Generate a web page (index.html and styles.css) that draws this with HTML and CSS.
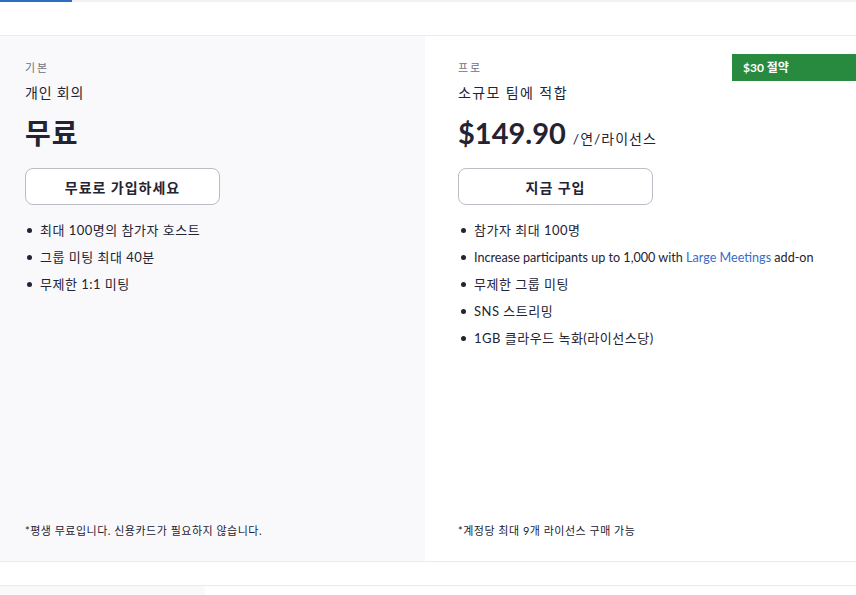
FILE: index.html
```html
<!DOCTYPE html>
<html lang="ko">
<head>
<meta charset="utf-8">
<title>Plans</title>
<link rel="stylesheet" href="styles.css">
</head>
<body>
<div class="tabs">
  <div class="tab-indicator"></div>
  <div class="tab-rest"></div>
</div>
<div class="tab-space"></div>
<div class="plans">
  <section class="plan plan-basic">
    <div class="plan-label">기본</div>
    <div class="plan-sub">개인 회의</div>
    <div class="plan-price"><span class="price-big kr">무료</span></div>
    <button class="plan-btn">무료로 가입하세요</button>
    <ul class="features">
      <li>최대 100명의 참가자 호스트</li>
      <li>그룹 미팅 최대 40분</li>
      <li>무제한 1:1 미팅</li>
    </ul>
    <div class="footnote">*평생 무료입니다. 신용카드가 필요하지 않습니다.</div>
  </section>
  <section class="plan plan-pro">
    <div class="badge">$30 절약</div>
    <div class="plan-label">프로</div>
    <div class="plan-sub">소규모 팀에 적합</div>
    <div class="plan-price"><span class="price-big">$149.90</span><span class="price-unit">/연/라이선스</span></div>
    <button class="plan-btn">지금 구입</button>
    <ul class="features">
      <li>참가자 최대 100명</li>
      <li class="en">Increase participants up to 1,000 with <a class="link" href="#">Large Meetings</a> add-on</li>
      <li>무제한 그룹 미팅</li>
      <li>SNS 스트리밍</li>
      <li>1GB 클라우드 녹화(라이선스당)</li>
    </ul>
    <div class="footnote">*계정당 최대 9개 라이선스 구매 가능</div>
  </section>
</div>
<div class="gap-row"></div>
<div class="bottom-row">
  <div class="bottom-block"></div>
</div>
</body>
</html>
```
FILE: styles.css
```css
* { box-sizing: border-box; }
html, body {
  margin: 0;
  padding: 0;
  background: #ffffff;
}
body {
  font-family: Lato, "Noto Sans CJK KR", sans-serif;
  color: #232333;
  width: 856px;
  overflow: hidden;
}
.tabs {
  display: flex;
  height: 2px;
}
.tab-indicator {
  width: 72px;
  background: #2d6cc0;
}
.tab-rest {
  flex: 1;
  background: #f1f1f3;
}
.tab-space {
  height: 34px;
  border-bottom: 1px solid #ebebee;
}
.plans {
  display: grid;
  grid-template-columns: 425px 431px;
  height: 526px;
  border-bottom: 1px solid #ebebee;
}
.plan {
  position: relative;
  display: flex;
  flex-direction: column;
  align-items: flex-start;
  padding: 24px 0 22px 25px;
}
.plan-basic {
  background: #f9f9fb;
}
.plan-pro {
  background: #ffffff;
  padding-left: 33px;
}
.plan-label {
  font-size: 11px;
  line-height: 16px;
  color: #6e7080;
  letter-spacing: 2px;
}
.plan-sub {
  margin-top: 8px;
  font-size: 14px;
  line-height: 18px;
  letter-spacing: 1px;
}
.plan-basic .plan-sub {
  letter-spacing: 0.8px;
}
.plan-pro .plan-sub {
  letter-spacing: 1.4px;
}
.plan-price {
  margin-top: 10px;
  height: 42px;
  display: flex;
  align-items: baseline;
}
.price-big {
  font-size: 29px;
  font-weight: 700;
  line-height: 42px;
  color: #232333;
}
.price-big.kr {
  font-size: 28px;
  letter-spacing: 1px;
}
.price-unit {
  margin-left: 7px;
  font-size: 14px;
  letter-spacing: 1px;
  color: #232333;
}
.plan-btn {
  margin-top: 14px;
  width: 195px;
  height: 37px;
  border: 1px solid #bcbcc4;
  border-radius: 8px;
  background: #ffffff;
  font-family: Lato, "Noto Sans CJK KR", sans-serif;
  font-size: 14px;
  font-weight: 700;
  color: #232333;
  letter-spacing: 1px;
}
.features {
  list-style: none;
  margin: 12px 0 0 0;
  padding: 0;
}
.features li {
  position: relative;
  padding-left: 15px;
  font-size: 13px;
  line-height: 27px;
  letter-spacing: 0.5px;
  color: #232333;
}
.plan-pro .features li {
  padding-left: 16px;
}
.features li.en {
  font-size: 12.6px;
  letter-spacing: 0;
}
.features li::before {
  content: "";
  position: absolute;
  left: 2px;
  top: 11px;
  width: 5px;
  height: 5px;
  border-radius: 50%;
  background: #232333;
}
.plan-pro .features li::before {
  left: 3px;
}
.link {
  color: #3b6cc6;
  text-decoration: none;
}
.footnote {
  margin-top: auto;
  font-size: 11px;
  line-height: 16px;
  letter-spacing: 0.5px;
  color: #232333;
}
.badge {
  position: absolute;
  top: 18px;
  right: 0;
  width: 124px;
  height: 27px;
  background: #288a3f;
  color: #ffffff;
  font-size: 12px;
  font-weight: 700;
  line-height: 27px;
  padding-left: 11px;
}
.gap-row {
  height: 24px;
  border-bottom: 1px solid #ebebee;
}
.bottom-row {
  height: 20px;
}
.bottom-block {
  width: 205px;
  height: 100%;
  background: #f9f9fb;
}
```
